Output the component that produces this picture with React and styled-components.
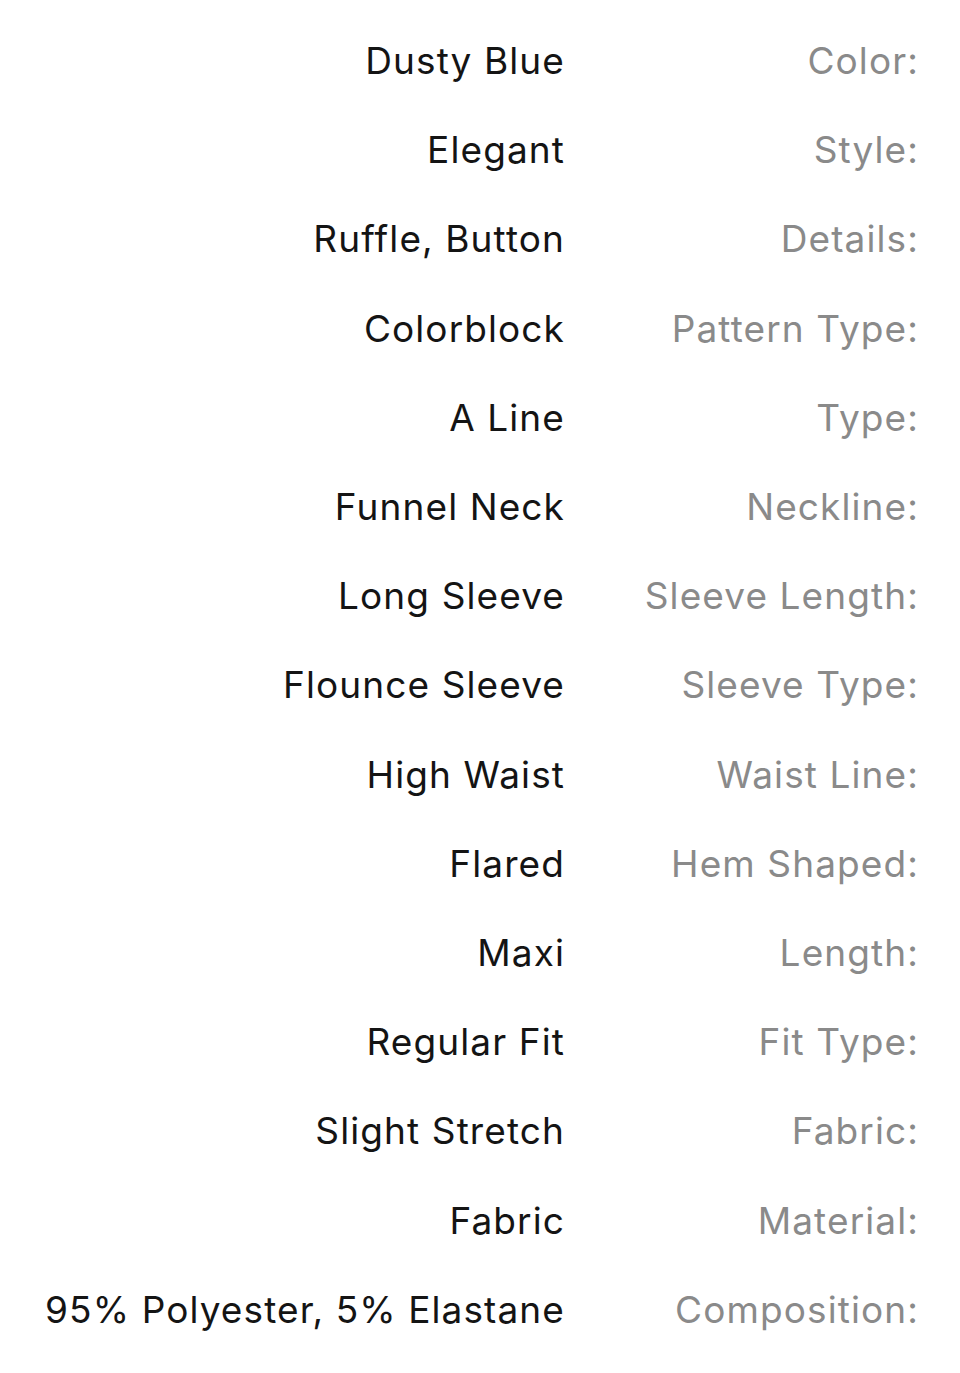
import React from "react";
import styled, { createGlobalStyle } from "styled-components";

const Global = createGlobalStyle`
  html, body { margin: 0; padding: 0; background: #fff; }
  body { font-family: Inter, "Noto Sans", sans-serif; -webkit-font-smoothing: antialiased; }
`;

const Table = styled.div`
  display: grid;
  grid-template-columns: 565px 354px;
  grid-auto-rows: 89.2px;
  padding-top: 16px;
  width: 919px;
`;

const Cell = styled.div`
  display: flex;
  align-items: center;
  justify-content: flex-end;
  font-size: 37px;
  letter-spacing: 1.1px;
  white-space: nowrap;
  color: ${(p) => (p.$label ? "#8a8a8a" : "#141414")};
`;

const rows = [
  ["Dusty Blue", "Color:"],
  ["Elegant", "Style:"],
  ["Ruffle, Button", "Details:"],
  ["Colorblock", "Pattern Type:"],
  ["A Line", "Type:"],
  ["Funnel Neck", "Neckline:"],
  ["Long Sleeve", "Sleeve Length:"],
  ["Flounce Sleeve", "Sleeve Type:"],
  ["High Waist", "Waist Line:"],
  ["Flared", "Hem Shaped:"],
  ["Maxi", "Length:"],
  ["Regular Fit", "Fit Type:"],
  ["Slight Stretch", "Fabric:"],
  ["Fabric", "Material:"],
  ["95% Polyester, 5% Elastane", "Composition:"],
];

export default function App() {
  return (
    <>
      <Global />
      <Table>
        {rows.map(([v, l]) => (
          <React.Fragment key={l}>
            <Cell>{v}</Cell>
            <Cell $label>{l}</Cell>
          </React.Fragment>
        ))}
      </Table>
    </>
  );
}
